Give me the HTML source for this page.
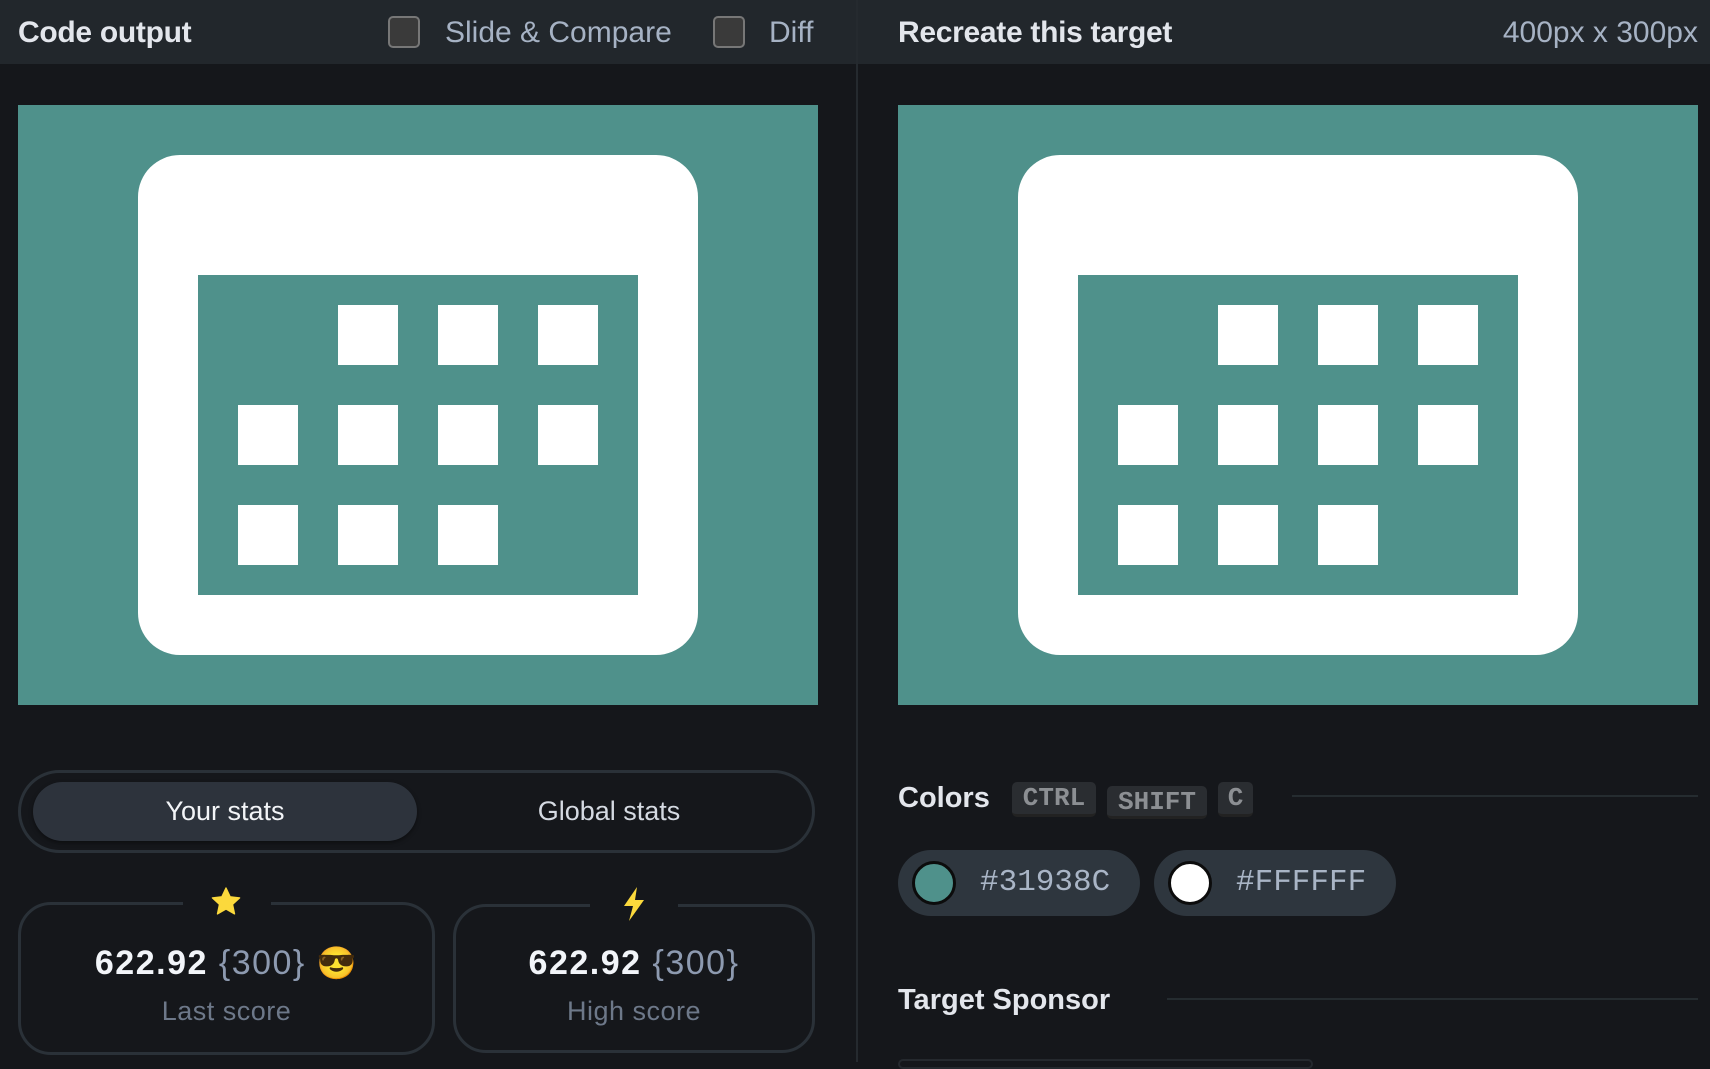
<!DOCTYPE html>
<html><head><meta charset="utf-8"><style>
*{box-sizing:border-box;margin:0;padding:0}
body{width:1710px;height:1062px;background:#15171b;font-family:"Liberation Sans",sans-serif;position:relative;overflow:hidden;color:#e6e9ee}
.abs{position:absolute}
.hdr{top:0;height:64px;background:#22272c}
.h1{font-weight:bold;font-size:30px;color:#e3e6ec;top:16px;letter-spacing:-0.3px}
.lbl{font-size:30px;color:#a6b2c4;top:16px}
.cb{width:32px;height:32px;border:2px solid #777;border-radius:5px;background:#3a3a3a;top:16px}
.canvas{top:105px;width:800px;height:600px;background:#4f918b}
.card{border:3px solid #2a3138;border-radius:33px}
.kbd{background:#2a2d31;border-radius:5px;color:#8c8f93;font-family:"Liberation Mono",monospace;font-weight:bold;font-size:26px;text-align:center;line-height:32px;border-bottom:3px solid #222}
.pill{top:850px;height:66px;border-radius:33px;background:#2e363e}
.dot{position:absolute;left:14px;top:11px;width:44px;height:44px;border-radius:50%;border:3px solid #0c0c0c}
.hex{position:absolute;left:82px;top:15px;font-family:"Liberation Mono",monospace;font-size:31px;color:#a9b5c6}
.line{height:2px;background:#252c30}
.score{font-size:34px;letter-spacing:1.5px}
</style></head><body>
<div class="abs hdr" style="left:0;width:856px"></div>
<div class="abs hdr" style="left:858px;width:852px"></div>
<div class="abs" style="left:856px;top:0;width:2px;height:1062px;background:#252a2f"></div>
<div class="abs h1" style="left:18px">Code output</div>
<div class="abs cb" style="left:388px"></div>
<div class="abs lbl" style="left:445px">Slide &amp; Compare</div>
<div class="abs cb" style="left:713px"></div>
<div class="abs lbl" style="left:769px">Diff</div>
<div class="abs h1" style="left:898px">Recreate this target</div>
<div class="abs lbl" style="right:12px">400px x 300px</div>

<svg class="abs canvas" style="left:18px" viewBox="0 0 800 600"><rect x="120" y="50" width="560" height="500" rx="42" fill="#fff"/><rect x="180" y="170" width="440" height="320" fill="#4f918b"/><g fill="#fff"><rect x="320" y="200" width="60" height="60"/><rect x="420" y="200" width="60" height="60"/><rect x="520" y="200" width="60" height="60"/><rect x="220" y="300" width="60" height="60"/><rect x="320" y="300" width="60" height="60"/><rect x="420" y="300" width="60" height="60"/><rect x="520" y="300" width="60" height="60"/><rect x="220" y="400" width="60" height="60"/><rect x="320" y="400" width="60" height="60"/><rect x="420" y="400" width="60" height="60"/></g></svg>
<svg class="abs canvas" style="left:898px" viewBox="0 0 800 600"><rect x="120" y="50" width="560" height="500" rx="42" fill="#fff"/><rect x="180" y="170" width="440" height="320" fill="#4f918b"/><g fill="#fff"><rect x="320" y="200" width="60" height="60"/><rect x="420" y="200" width="60" height="60"/><rect x="520" y="200" width="60" height="60"/><rect x="220" y="300" width="60" height="60"/><rect x="320" y="300" width="60" height="60"/><rect x="420" y="300" width="60" height="60"/><rect x="520" y="300" width="60" height="60"/><rect x="220" y="400" width="60" height="60"/><rect x="320" y="400" width="60" height="60"/><rect x="420" y="400" width="60" height="60"/></g></svg>

<div class="abs" style="left:18px;top:770px;width:797px;height:83px;border:3px solid #2a3138;border-radius:42px"></div>
<div class="abs" style="left:33px;top:782px;width:384px;height:59px;border-radius:30px;background:#2d333c;box-shadow:0 2px 4px rgba(0,0,0,.4)"></div>
<div class="abs" style="left:33px;top:796px;width:384px;text-align:center;font-size:27px;color:#f2f4f7">Your stats</div>
<div class="abs" style="left:417px;top:796px;width:384px;text-align:center;font-size:27px;color:#d5dae2">Global stats</div>

<div class="abs card" style="left:18px;top:902px;width:417px;height:153px"></div>
<div class="abs" style="left:183px;top:898px;width:88px;height:10px;background:#15171b"></div>
<svg class="abs" style="left:210px;top:886px" width="32" height="32" viewBox="0 0 24 24"><path d="M12 1.5l3.1 6.6 7.1.8-5.3 4.9 1.5 7.1L12 17.3 5.6 20.9l1.5-7.1L1.8 8.9l7.1-.8z" fill="#fbd93c" stroke="#fbd93c" stroke-linejoin="round" stroke-width="1"/></svg>
<div class="abs score" style="left:18px;top:944px;width:417px;text-align:center"><b style="color:#f2f5f9">622.92</b> <span style="color:#8d9ab0">{300}</span> <span style="font-size:32px">😎</span></div>
<div class="abs" style="left:18px;top:996px;width:417px;text-align:center;font-size:27px;letter-spacing:0.5px;color:#6d7889">Last score</div>

<div class="abs card" style="left:453px;top:904px;width:362px;height:149px"></div>
<div class="abs" style="left:590px;top:900px;width:88px;height:10px;background:#15171b"></div>
<svg class="abs" style="left:620px;top:886px" width="28" height="36" viewBox="0 0 28 36"><path d="M17 1 L4 20 L13 20 L9 35 L24 14 L15 14 Z" fill="#fbd93c"/></svg>
<div class="abs score" style="left:453px;top:944px;width:362px;text-align:center"><b style="color:#f2f5f9">622.92</b> <span style="color:#8d9ab0">{300}</span></div>
<div class="abs" style="left:453px;top:996px;width:362px;text-align:center;font-size:27px;letter-spacing:0.5px;color:#6d7889">High score</div>

<div class="abs" style="left:898px;top:782px;font-weight:bold;font-size:29px;color:#e3e6ec">Colors</div>
<div class="abs kbd" style="left:1012px;top:782px;width:84px;height:35px">CTRL</div>
<div class="abs kbd" style="left:1107px;top:786px;width:100px;height:33px">SHIFT</div>
<div class="abs kbd" style="left:1218px;top:782px;width:35px;height:35px">C</div>
<div class="abs line" style="left:1292px;top:795px;width:406px"></div>
<div class="abs pill" style="left:898px;width:242px"><div class="dot" style="background:#4f918b"></div><div class="hex">#31938C</div></div>
<div class="abs pill" style="left:1154px;width:242px"><div class="dot" style="background:#fff"></div><div class="hex">#FFFFFF</div></div>
<div class="abs" style="left:898px;top:984px;font-weight:bold;font-size:29px;color:#e3e6ec">Target Sponsor</div>
<div class="abs line" style="left:1167px;top:998px;width:531px"></div>
<div class="abs" style="left:898px;top:1059px;width:415px;height:10px;border:2px solid #25292e;border-radius:10px"></div>
</body></html>
